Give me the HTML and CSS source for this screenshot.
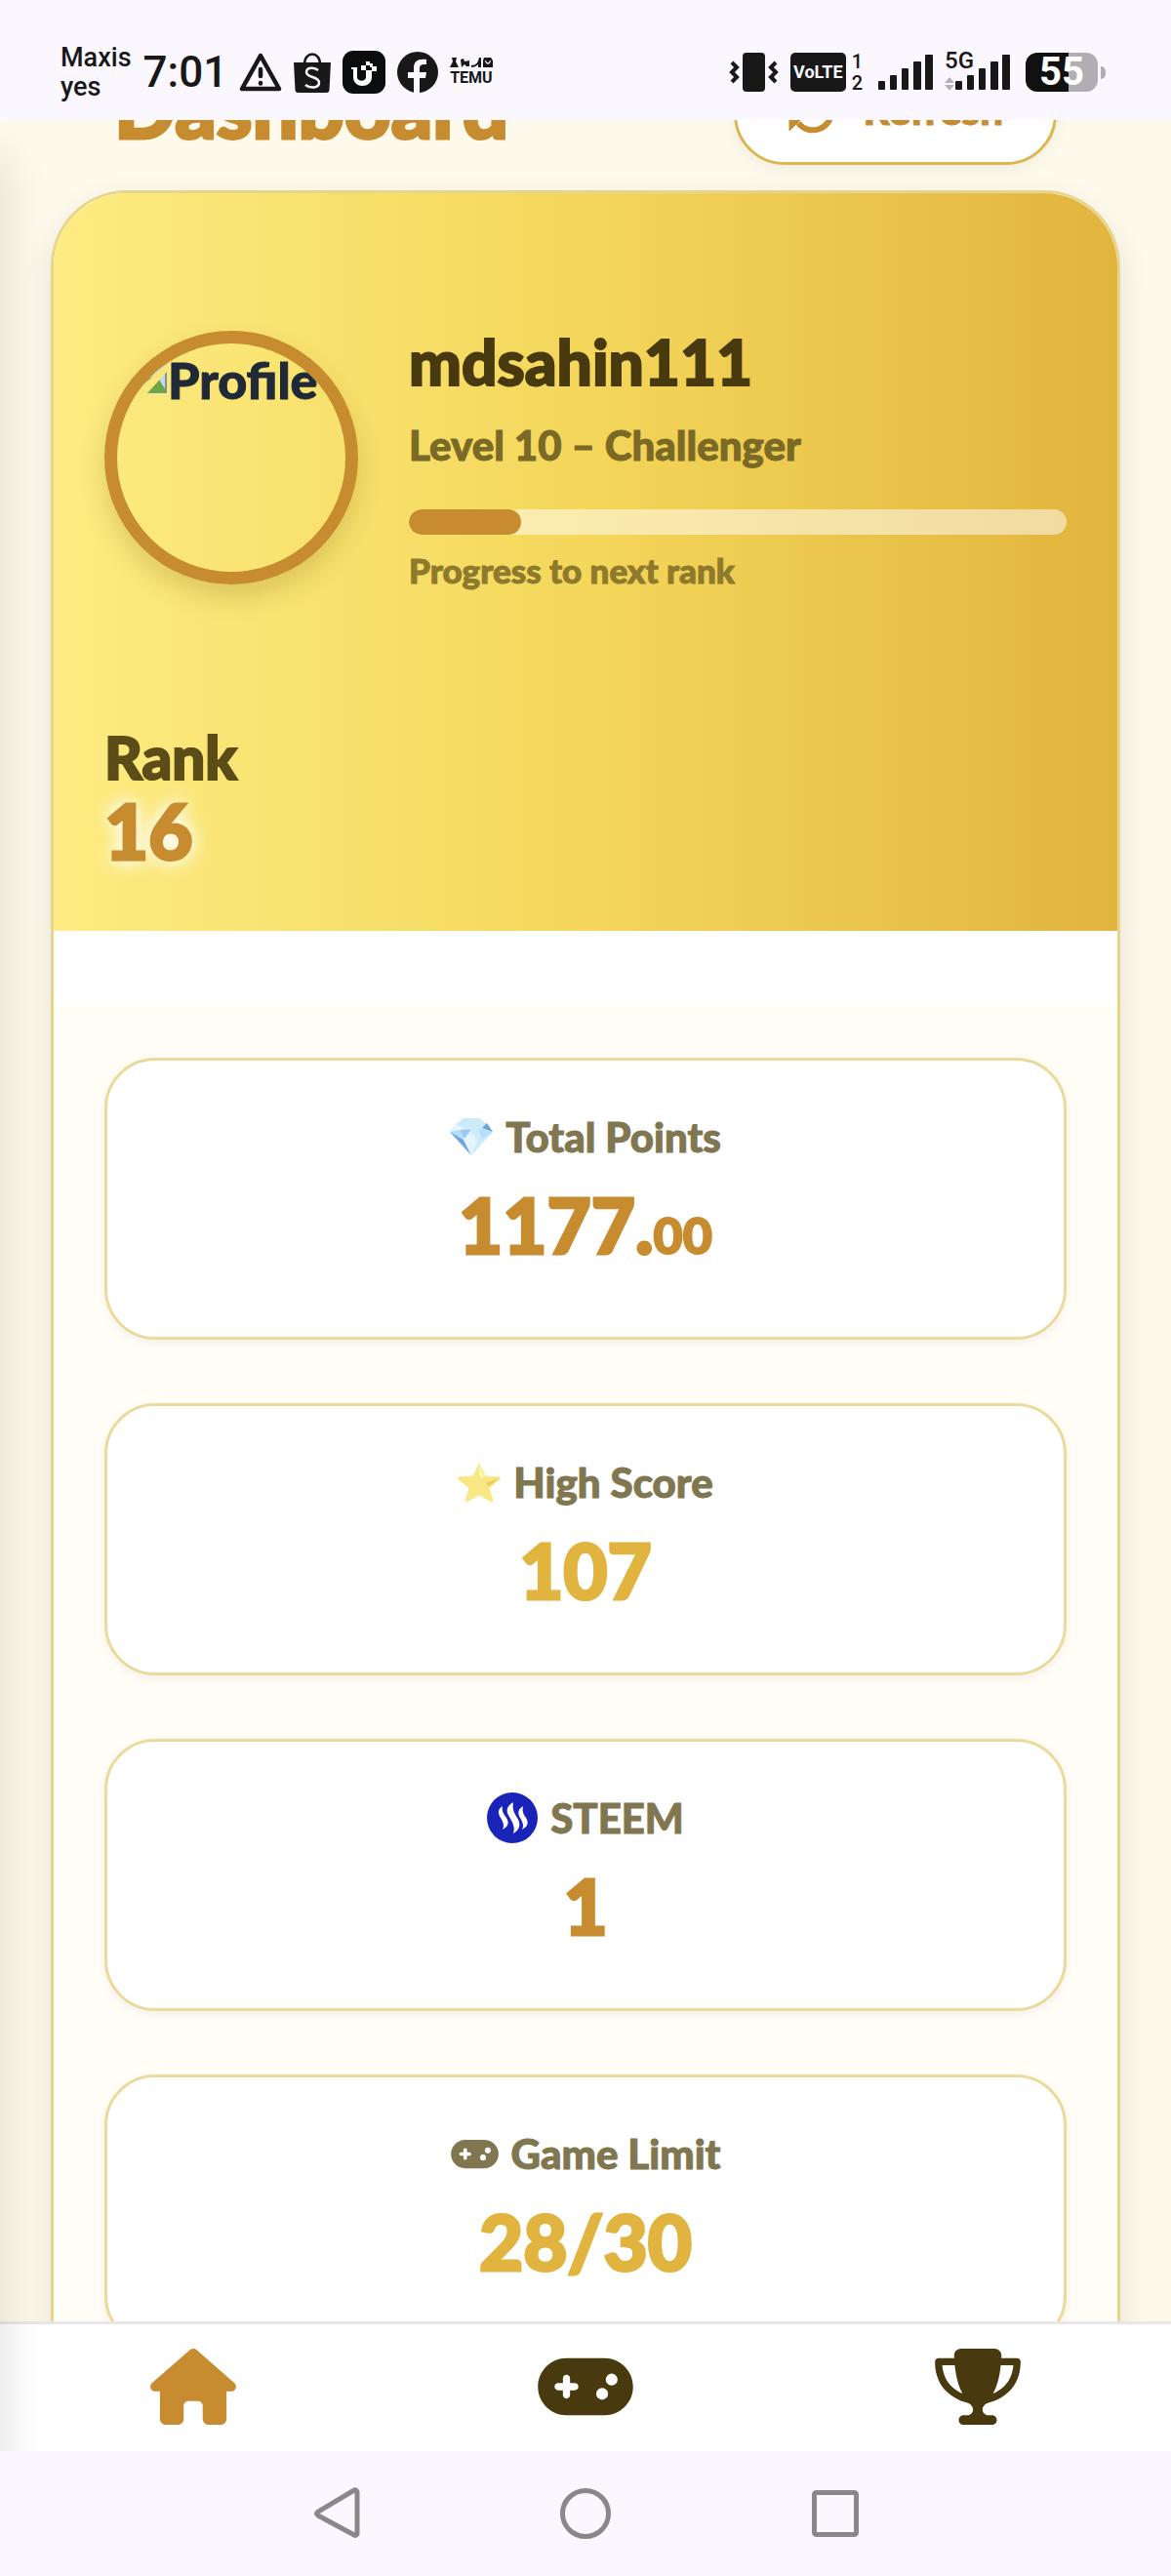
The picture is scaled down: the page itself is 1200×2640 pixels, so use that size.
FILE: index.html
```html
<!DOCTYPE html>
<html lang="en">
<head>
  <meta charset="UTF-8" />
  <meta name="viewport" content="width=device-width, initial-scale=1.0"/>
  <title>Dashboard</title>
  <link rel="stylesheet" href="styles.css">
</head>
<body>
  <div class="status-bar">
    <div class="status-left">
      <div class="carrier">Maxis<br>yes</div>
      <div class="clock">7:01</div>
      <svg width="44" height="42" viewBox="0 0 44 42" fill="none" stroke="#181818" stroke-width="4.5" stroke-linejoin="round" stroke-linecap="round">
        <path d="M22 4L3 38h38z"/>
        <path d="M22 18v7M22 32v.5"/>
      </svg>
      <svg width="38" height="42" viewBox="0 0 38 42">
        <path d="M11 13c0-14 16-14 16 0" fill="none" stroke="#181818" stroke-width="2.5"/>
        <path d="M0 11h38l-1.500 28q-.2 3-3 3h-29q-2.800 0-3-3z" fill="#181818"/>
        <path d="M25 19c-4-3.500-12-3-12 2 0 6 13 4 13 10.500 0 6-9 6.500-14 2.500" fill="none" stroke="#faf7ff" stroke-width="2.500"/>
      </svg>
      <svg width="44" height="44" viewBox="0 0 44 44">
        <rect width="44" height="44" rx="11" fill="#0b0c0e"/>
        <path d="M9 17h6v10c0 5 9 5 9 0v-7h6v7c0 12-19 12-19 0v-8h-2z" fill="#fff"/>
        <path d="M19 15h5v5h-5zM24 11h4v4h-4zM30 16h5v5h-5zM24 20h6v4h-6zM28 13h3v4h-3z" fill="#fff"/>
      </svg>
      <svg width="42" height="42" viewBox="0 0 42 42">
        <circle cx="21" cy="21" r="21" fill="#181818"/>
        <path d="M17 42V27h-6v-6h6v-4c0-7 4-10 13-9v5c-5-.5-7 .5-7 4v4h7l-1 6h-6v15z" fill="#faf7ff"/>
      </svg>
      <div class="temu">
        <svg width="44" height="10" viewBox="0 0 44 10" fill="#181818">
          <path d="M2 0h5L6 4l3 6H0l3-6zM11 2l3-1 1 3 5-1v6h-3l-2-2-3 3zM22 8c5 0 7-3 8-8h2v10h-3V7c-2 2-4 3-7 3z"/>
          <path d="M35 0h7l2 3v7H34V3zm1 3c1 5 5 5 6 0h-1c-1 3-3 3-4 0z" fill-rule="evenodd"/>
        </svg>
        <span>TEMU</span>
      </div>
    </div>
    <div class="status-right">
      <svg width="51" height="40" viewBox="0 0 51 40">
        <rect x="14" width="23" height="40" rx="4" fill="#181818"/>
        <path d="M3 10l5 5-5 5 5 5-5 5M48 10l-5 5 5 5-5 5 5 5" fill="none" stroke="#181818" stroke-width="4"/>
      </svg>
      <div class="volte">VoLTE</div>
      <div class="sims"><span>1</span><span>2</span></div>
      <svg width="56" height="36" viewBox="0 0 56 36" fill="#181818">
        <rect y="27" width="7" height="9" rx="1"/><rect x="12" y="21" width="7" height="15" rx="1"/><rect x="24" y="14" width="7" height="22" rx="1"/><rect x="36" y="7" width="8" height="29" rx="1"/><rect x="48" width="8" height="36" rx="1"/>
      </svg>
      <div class="network">
        <span class="network-type">5G</span>
        <svg width="67" height="36" viewBox="0 0 67 36" fill="#181818">
          <path d="M0 29l5-6 5 6zM0 31h10l-5 6z" fill="#b4b2b8"/>
          <rect x="11" y="27" width="7" height="9" rx="1"/><rect x="23" y="21" width="7" height="15" rx="1"/><rect x="35" y="14" width="7" height="22" rx="1"/><rect x="47" y="7" width="8" height="29" rx="1"/><rect x="59" width="8" height="36" rx="1"/>
        </svg>
      </div>
      <div class="battery">55</div>
    </div>
  </div>

  <div class="app">
    <main class="content">
      <header class="page-header">
        <h1>Dashboard</h1>
        <button class="refresh" type="button">
          <svg width="52" height="52" viewBox="0 0 52 52" fill="none" stroke="#c78c30" stroke-width="6">
            <path d="M7 28a19 19 0 0 1 33-13M45 28a19 19 0 0 1-34 12"/>
            <path d="M49 5v17H32zM2 48V31h17z" fill="#c78c30" stroke-width="1" stroke-linejoin="round"/>
          </svg>
          Refresh
        </button>
      </header>

      <section class="card">
        <div class="hero">
          <div class="profile">
            <div class="avatar">
              <svg width="52" height="52" viewBox="0 0 52 52">
                <path d="M2 2h34l14 14v34H2z" fill="#c5d6f0" stroke="#84909f" stroke-width="2"/>
                <path d="M2 50l18-26 12 12 8-4 11 18z" fill="#6da544"/>
                <path d="M16 52L52 20v8L30 52z" fill="#f9e67a"/>
              </svg>
              <span>Profile</span>
            </div>
            <div class="info">
              <h2>mdsahin111</h2>
              <p class="level">Level 10 – Challenger</p>
              <div class="progress" role="progressbar" aria-label="Progress to next rank" aria-valuenow="17" aria-valuemin="0" aria-valuemax="100">
                <div class="progress-fill" style="width: 17%"></div>
              </div>
              <p class="progress-note">Progress to next rank</p>
            </div>
          </div>
          <div class="rank">
            <p class="rank-label">Rank</p>
            <p class="rank-value">16</p>
          </div>
        </div>

        <div class="stats">
          <div class="stat decimals">
            <p class="stat-label">
              <svg width="44" height="40" viewBox="0 0 44 40">
                <path d="M14 1h16l8 6 6 8-22 24L0 15l6-8z" fill="#cdeaf9"/>
                <path d="M6 7l10 5-15 3zM16 12l6 10-8 0z" fill="#e6f5fd"/>
                <path d="M0 15l16-3 5 1-7 9z" fill="#b3dcf8"/>
                <path d="M0 15l14 8 8 16z" fill="#6fa5e2"/>
                <path d="M11 13l11 0-7 9z" fill="#9cc6f3"/>
                <path d="M14 23l7-9 8 9-7 16z" fill="#e4f4fd"/>
                <path d="M29 12l4 10 11-7z" fill="#b9dff8"/>
                <path d="M38 6l6 9-11-4z" fill="#67a3d5"/>
              </svg>
              Total Points
            </p>
            <p class="stat-value bronze">1177.<small>00</small></p>
          </div>

          <div class="stat">
            <p class="stat-label">
              <svg width="44" height="42" viewBox="0 0 44 42">
                <path d="M22 2l6 13 15 1q1 1 0 2L32 27l4 13-1 1-13-7-13 7-1-1 4-13L1 18q-1-1 0-2l15-1z" fill="#f9e784" stroke="#f9e784" stroke-linejoin="round"/>
                <path d="M22 3l5 12-2 2-3-4z" fill="#fdf8b8"/>
                <path d="M29 22l13-5-10 8z" fill="#e9c85d"/>
              </svg>
              High Score
            </p>
            <p class="stat-value gold">107</p>
          </div>

          <div class="stat">
            <p class="stat-label">
              <svg width="52" height="52" viewBox="0 0 52 52">
                <circle cx="26" cy="26" r="26" fill="#1a24b8"/>
                <path d="M16 14c-5 3-5 7-2 12 3 5 4 8 2 12 6-3 7-7 4-12-3-4-5-7-4-12zM27 10c-7 4-8 9-4 15 4 7 6 11 4 17 7-4 8-10 4-16-4-6-5-10-4-16zM37 14c-5 3-6 7-3 12 3 5 4 8 2 12 6-3 7-7 4-12-3-4-4-7-3-12z" fill="#fff"/>
              </svg>
              STEEM
            </p>
            <p class="stat-value bronze">1</p>
          </div>

          <div class="stat">
            <p class="stat-label">
              <svg width="49" height="39" viewBox="0 0 640 512" fill="currentColor"><path d="M192 64C86 64 0 150 0 256S86 448 192 448H448c106 0 192-86 192-192s-86-192-192-192H192zM496 168a40 40 0 1 1 0 80 40 40 0 1 1 0-80zM392 304a40 40 0 1 1 80 0 40 40 0 1 1 -80 0zM168 200c0-13.300 10.700-24 24-24s24 10.700 24 24v32h32c13.300 0 24 10.700 24 24s-10.700 24-24 24H216v32c0 13.300-10.700 24-24 24s-24-10.700-24-24V280H136c-13.300 0-24-10.700-24-24s10.700-24 24-24h32V200z"/></svg>
              Game Limit
            </p>
            <p class="stat-value gold">28/30</p>
          </div>
        </div>
      </section>
    </main>

    <nav class="tab-bar">
      <a class="active" href="#home" aria-label="Home">
        <svg width="88" height="78" viewBox="0 0 576 512" fill="currentColor"><path d="M575.8 255.500c0 18-15 32.100-32 32.100h-32l.7 160.200c0 2.700-.2 5.400-.5 8.100V472c0 22.100-17.900 40-40 40H456c-1.100 0-2.200 0-3.300-.1c-1.400 .1-2.800 .1-4.200 .1H416 392c-22.100 0-40-17.900-40-40V448 384c0-17.700-14.300-32-32-32H256c-17.700 0-32 14.300-32 32v64 24c0 22.100-17.900 40-40 40H160 128.100c-1.500 0-3-.1-4.500-.2c-1.200 .1-2.400 .2-3.600 .2H104c-22.100 0-40-17.900-40-40V360c0-.9 0-1.900 .1-2.800V287.600H32c-18 0-32-14-32-32.100c0-9 3-17 10-24L266.400 8c7-7 15-8 22-8s15 2 21 7L564.800 231.500c8 7 12 15 11 24z"/></svg>
      </a>
      <a href="#game" aria-label="Game">
        <svg width="98" height="78" viewBox="0 0 640 512" fill="currentColor"><path d="M192 64C86 64 0 150 0 256S86 448 192 448H448c106 0 192-86 192-192s-86-192-192-192H192zM496 168a40 40 0 1 1 0 80 40 40 0 1 1 0-80zM392 304a40 40 0 1 1 80 0 40 40 0 1 1 -80 0zM168 200c0-13.300 10.700-24 24-24s24 10.700 24 24v32h32c13.300 0 24 10.700 24 24s-10.700 24-24 24H216v32c0 13.300-10.700 24-24 24s-24-10.700-24-24V280H136c-13.300 0-24-10.700-24-24s10.700-24 24-24h32V200z"/></svg>
      </a>
      <a href="#leaderboard" aria-label="Leaderboard">
        <svg width="88" height="78" viewBox="0 0 576 512" fill="currentColor"><path d="M400 0H176c-26.500 0-48.100 21.800-47.100 48.200c.2 5.300 .4 10.600 .7 15.800H24C10.700 64 0 74.700 0 88c0 92.600 33.500 157 78.500 200.700c44.300 43.100 98.300 64.800 138.100 75.800c23.400 6.500 39.400 26 39.400 45.600c0 20.900-17 37.900-37.900 37.900H192c-17.700 0-32 14.300-32 32s14.300 32 32 32H384c17.700 0 32-14.300 32-32s-14.300-32-32-32H357.900C337 448 320 431 320 410.100c0-19.600 15.900-39.200 39.400-45.600c39.900-11 93.900-32.700 138.200-75.800C542.500 245 576 180.600 576 88c0-13.300-10.700-24-24-24H446.400c.3-5.200 .5-10.400 .7-15.800C448.100 21.800 426.500 0 400 0zM48.900 112h84.400c9.100 90.100 29.200 150.300 51.900 190.600c-24.900-11-50.800-26.500-73.200-48.300c-32-31.100-58-76-63-142.300zM464.100 254.300c-22.400 21.800-48.300 37.300-73.200 48.300c22.700-40.300 42.800-100.500 51.900-190.600h84.400c-5.100 66.300-31.100 111.200-63 142.300z"/></svg>
      </a>
    </nav>
  </div>

  <div class="system-nav">
    <button type="button" aria-label="Back">
      <svg width="56" height="56" viewBox="0 0 56 56"><path d="M50 6v43q-1 2-3 1L10 30q-3-2 0-4L47 4q2-1 3 2z"/></svg>
    </button>
    <button type="button" aria-label="Home screen">
      <svg width="56" height="56" viewBox="0 0 56 56"><circle cx="28" cy="28" r="23.500"/></svg>
    </button>
    <button type="button" aria-label="Recent apps">
      <svg width="56" height="56" viewBox="0 0 56 56"><rect x="6.500" y="6.500" width="43" height="43" rx="2"/></svg>
    </button>
  </div>
</body>
</html>
```
FILE: styles.css
```css
* {
  box-sizing: border-box;
}

body {
  margin: 0;
  height: 100vh;
  display: flex;
  flex-direction: column;
  overflow: hidden;
  background: #fefaeb;
  font-family: Lato, "Open Sans", sans-serif;
  font-weight: 900;
}

h1, h2, p {
  margin: 0;
  font-weight: 900;
}

svg {
  display: block;
  flex: none;
}

button {
  font: inherit;
  cursor: pointer;
}

/* phone status bar */
.status-bar {
  position: relative;
  z-index: 2;
  flex: none;
  height: 123px;
  padding: 24px 75px 0 62px;
  display: flex;
  justify-content: space-between;
  align-items: center;
  background: #faf7ff;
  color: #181818;
  font-family: Roboto, sans-serif;
  font-weight: 500;
}

.status-left,
.status-right {
  display: flex;
  align-items: center;
  gap: 12px;
}

.carrier {
  font-size: 27px;
  line-height: 30px;
}

.clock {
  font-size: 44px;
  line-height: 48px;
}

.temu {
  display: flex;
  flex-direction: column;
  gap: 2px;
  font-size: 16px;
  line-height: 18px;
  font-weight: 700;
}

.volte {
  padding: 0 3px;
  border-radius: 5px;
  background: #181818;
  color: #faf7ff;
  font-size: 18px;
  line-height: 40px;
  font-weight: 700;
}

.sims {
  display: flex;
  flex-direction: column;
  margin: 0 4px 0 -6px;
  font-size: 20px;
  line-height: 22px;
}

.network {
  position: relative;
}

.network-type {
  position: absolute;
  left: 0;
  top: -6px;
  font-size: 24px;
  line-height: 24px;
}

.battery {
  position: relative;
  width: 74px;
  margin-left: 4px;
  border-radius: 12px;
  background: linear-gradient(90deg, #111 60%, #b0aeb4 60%);
  color: #fff;
  font-size: 40px;
  line-height: 40px;
  font-weight: 700;
  text-align: center;
}

.battery::after {
  content: "";
  position: absolute;
  right: -8px;
  top: 14px;
  width: 5px;
  height: 13px;
  border-radius: 0 5px 5px 0;
  background: #b0aeb4;
}

/* app */
.app {
  position: relative;
  flex: 1;
  min-height: 0;
  display: flex;
  flex-direction: column;
  overflow: hidden;
  -webkit-text-stroke: 1px currentColor;
}

/* edge shadow of the closed side menu */
.app::before {
  content: "";
  position: absolute;
  z-index: 3;
  left: -60px;
  top: 40px;
  bottom: -40px;
  width: 60px;
  box-shadow: 0 0 52px rgba(0, 0, 0, 0.14);
  pointer-events: none;
}

.content {
  flex: 1;
  min-height: 0;
  padding: 0 52px;
  overflow: hidden;
}

.page-header {
  display: flex;
  justify-content: space-between;
  align-items: center;
  margin-top: -68px;
  margin-bottom: 26px;
  padding: 0 65px;
}

.page-header h1 {
  padding-bottom: 4px;
  color: #c78c30;
  font-size: 83px;
  line-height: 100px;
  -webkit-text-stroke-width: 3px;
}

.refresh {
  display: flex;
  align-items: center;
  gap: 26px;
  height: 114px;
  padding: 0 52px;
  border: 3px solid #dcb650;
  border-radius: 52px;
  background: #fff;
  color: #c78c30;
  font-size: 42px;
  box-shadow: 0 4px 16px rgba(0, 0, 0, 0.06);
}

.card {
  border: 3px solid #e8d58c;
  border-radius: 78px;
  background: #fff;
  overflow: hidden;
  box-shadow: 0 13px 32px rgba(0, 0, 0, 0.1);
}

.hero {
  padding: 134px 52px 58px;
  background: linear-gradient(90deg, #fdec82, #f4d75b 50%, #e1b43e);
}

.profile {
  display: flex;
  align-items: center;
  gap: 52px;
}

.avatar {
  flex: none;
  width: 260px;
  height: 260px;
  border: 13px solid #c78c30;
  border-radius: 50%;
  display: flex;
  align-items: flex-start;
  overflow: hidden;
  color: #1f2937;
  font-size: 52px;
  line-height: 74px;
  box-shadow: 0 13px 26px rgba(100, 80, 0, 0.2);
}

.info {
  flex: 1;
}

.info h2 {
  color: #483a0e;
  font-size: 64px;
  line-height: 78px;
  -webkit-text-stroke-width: 2px;
}

.level {
  margin-top: 20px;
  color: #7b6a25;
  font-size: 42px;
  line-height: 52px;
}

.progress {
  height: 26px;
  margin-top: 40px;
  border-radius: 13px;
  background: rgba(255, 255, 255, 0.5);
  overflow: hidden;
}

.progress-fill {
  height: 100%;
  border-radius: 13px;
  background: #c78c30;
}

.progress-note {
  margin-top: 14px;
  color: #8e7a2c;
  font-size: 35px;
  line-height: 44px;
}

.rank {
  margin-top: 140px;
}

.rank-label {
  color: #5b4c18;
  font-size: 60px;
  line-height: 60px;
  -webkit-text-stroke-width: 2px;
}

.rank-value {
  color: #c78c30;
  font-size: 78px;
  line-height: 90px;
  text-shadow: 0 0 20px #fff, 0 0 20px #fff;
  -webkit-text-stroke-width: 3px;
}

.stats {
  display: flex;
  flex-direction: column;
  gap: 65px;
  margin-top: 77px;
  padding: 53px 52px;
  background: #fffdf5;
}

.stat {
  padding: 52px 52px 66px;
  border: 3px solid #ebda9c;
  border-radius: 52px;
  background: #fff;
  text-align: center;
  box-shadow: 0 3px 10px rgba(0, 0, 0, 0.06);
}

.stat.decimals {
  padding-bottom: 76px;
}

.stat-label {
  display: flex;
  justify-content: center;
  align-items: center;
  gap: 13px;
  height: 52px;
  color: #807650;
  font-size: 42px;
  line-height: 50px;
}

.stat-value {
  margin-top: 25px;
  font-size: 78px;
  line-height: 78px;
  -webkit-text-stroke-width: 3px;
}

.stat-value small {
  font-size: 52px;
  line-height: 52px;
  -webkit-text-stroke-width: 2px;
}

.bronze {
  color: #c78c30;
}

.gold {
  color: #e1b440;
}

/* bottom tabs */
.tab-bar {
  flex: none;
  height: 133px;
  padding-bottom: 2px;
  display: flex;
  justify-content: space-around;
  align-items: center;
  border-top: 3px solid #e5e7eb;
  background: #fff;
}

.tab-bar a {
  color: #483a0e;
}

.tab-bar a.active {
  color: #c78c30;
}

.system-nav {
  flex: none;
  height: 128px;
  display: flex;
  justify-content: center;
  align-items: center;
  gap: 200px;
  background: #faf7ff;
}

.system-nav button {
  padding: 0;
  border: none;
  background: none;
}

.system-nav svg {
  fill: none;
  stroke: #888;
  stroke-width: 5;
}
```
